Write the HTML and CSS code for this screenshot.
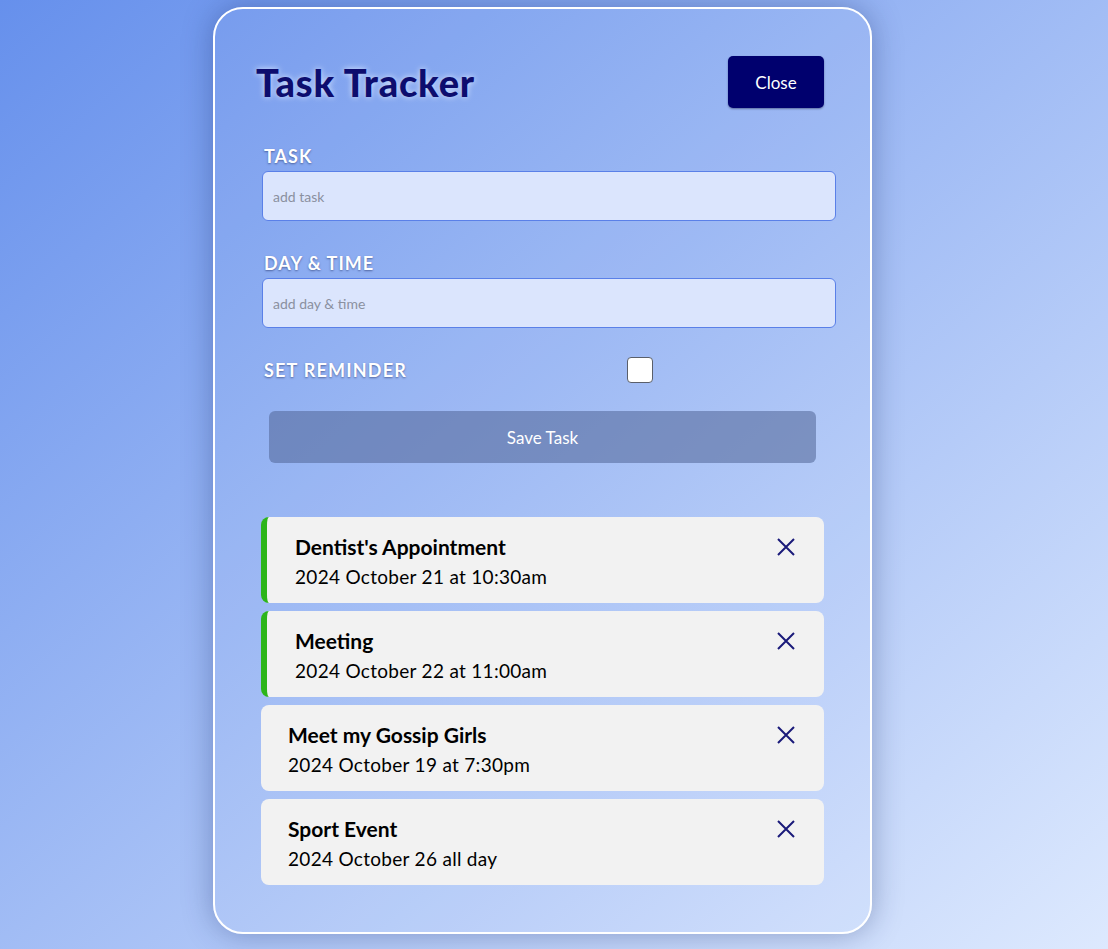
FILE: index.html
```html
<!DOCTYPE html>
<html lang="en">

<head>
    <meta name="viewport" content="width=device-width, initial-scale=1.0">
    <link rel="stylesheet" href="styles.css">
    <title>Task Tracker</title>
</head>

<body>
    <div class="container">
        <header class="header">
            <h1>Task Tracker</h1>
            <button class="btn btn-close">Close</button>
        </header>

        <form class="add-form">
            <div class="form-control">
                <label>Task</label>
                <input type="text" placeholder="add task">
            </div>
            <div class="form-control">
                <label>Day &amp; Time</label>
                <input type="text" placeholder="add day &amp; time">
            </div>
            <div class="form-control form-control-check">
                <label>Set Reminder</label>
                <input type="checkbox">
            </div>
            <input type="submit" value="Save Task" class="btn btn-save">
        </form>

        <div class="tasks">
            <div class="task reminder">
                <div>
                    <h3>Dentist's Appointment</h3>
                    <p>2024 October 21 at 10:30am</p>
                </div>
                <svg class="del" width="20" height="20" viewBox="0 0 20 20"><path d="M2 2 L18 18 M18 2 L2 18" /></svg>
            </div>
            <div class="task reminder">
                <div>
                    <h3>Meeting</h3>
                    <p>2024 October 22 at 11:00am</p>
                </div>
                <svg class="del" width="20" height="20" viewBox="0 0 20 20"><path d="M2 2 L18 18 M18 2 L2 18" /></svg>
            </div>
            <div class="task">
                <div>
                    <h3>Meet my Gossip Girls</h3>
                    <p>2024 October 19 at 7:30pm</p>
                </div>
                <svg class="del" width="20" height="20" viewBox="0 0 20 20"><path d="M2 2 L18 18 M18 2 L2 18" /></svg>
            </div>
            <div class="task">
                <div>
                    <h3>Sport Event</h3>
                    <p>2024 October 26 all day</p>
                </div>
                <svg class="del" width="20" height="20" viewBox="0 0 20 20"><path d="M2 2 L18 18 M18 2 L2 18" /></svg>
            </div>
        </div>
    </div>
</body>

</html>
```

FILE: styles.css
```css
* {
    box-sizing: border-box;
}

body {
    font-family: Lato, "Noto Sans", sans-serif;
    margin: 0;
    padding: 7px 0 0;
    min-height: 949px;
    background: linear-gradient(to bottom right, #6690ec, #dde9fe);
}

.container {
    width: 659px;
    height: 927px;
    margin: 0 0 0 213px;
    padding: 47px 46px 0;
    border: 2px solid #fff;
    border-radius: 30px;
    background: rgba(255, 255, 255, 0.04);
    box-shadow: 0 0 30px rgba(20, 40, 100, 0.35);
}

.header {
    display: flex;
    align-items: center;
    justify-content: space-between;
    margin-bottom: 37px;
}

.header h1 {
    margin: 0 0 0 -5px;
    font-size: 38px;
    font-weight: 900;
    letter-spacing: 0.8px;
    color: #0d0d6e;
    text-shadow: 0 0 6px rgba(230, 240, 255, 0.9);
}

.btn {
    border: none;
    border-radius: 5px;
    color: #fff;
    font-family: inherit;
    font-size: 17px;
    cursor: pointer;
}

.btn-close {
    width: 96px;
    height: 52px;
    background-color: #00006e;
    box-shadow: 0 1px 2px rgba(0, 0, 40, 0.4);
}

.add-form {
    margin: 0 -12px 54px 1px;
}

.form-control {
    margin-bottom: 31px;
}

.form-control label {
    display: block;
    height: 26px;
    padding-left: 2px;
    font-size: 18px;
    font-weight: 700;
    letter-spacing: 1px;
    text-transform: uppercase;
    color: #fff;
    text-shadow: 0 1px 2px rgba(20, 30, 80, 0.5);
}

.form-control input[type="text"] {
    width: 100%;
    height: 50px;
    padding: 0 10px;
    border: 1px solid #5a80e8;
    border-radius: 6px;
    background-color: #dbe5fd;
    font-family: inherit;
    font-size: 14px;
}

.form-control input::placeholder {
    color: #8a90a0;
}

.form-control-check {
    display: flex;
    align-items: center;
    margin-top: -2px;
    margin-bottom: 28px;
}

.form-control-check label {
    flex: 1;
    height: auto;
    letter-spacing: 1.2px;
}

.form-control-check input {
    appearance: none;
    width: 26px;
    height: 26px;
    margin: 0 183px 0 0;
    border: 1.5px solid #5a5f6a;
    border-radius: 4px;
    background: #fff;
}

.btn-save {
    display: block;
    width: 547px;
    height: 52px;
    margin-left: 7px;
    border-radius: 6px;
    background-color: rgba(80, 100, 150, 0.55);
}

.tasks {
    display: flex;
    flex-direction: column;
    gap: 8px;
}

.task {
    display: flex;
    justify-content: space-between;
    height: 86px;
    padding: 17px 28px 0 27px;
    border-radius: 8px;
    background-color: #f2f2f2;
}

.task.reminder {
    border-left: 6px solid #2cb51a;
    padding-left: 28px;
}

.task h3 {
    margin: 0 0 6px;
    font-size: 21px;
    font-weight: 700;
    color: #000;
}

.task p {
    margin: 0;
    font-size: 19px;
    letter-spacing: 0.3px;
    color: #000;
}

.del {
    margin-top: 3px;
    flex-shrink: 0;
}

.del path {
    stroke: #1a1a7a;
    stroke-width: 2;
    fill: none;
}
```
